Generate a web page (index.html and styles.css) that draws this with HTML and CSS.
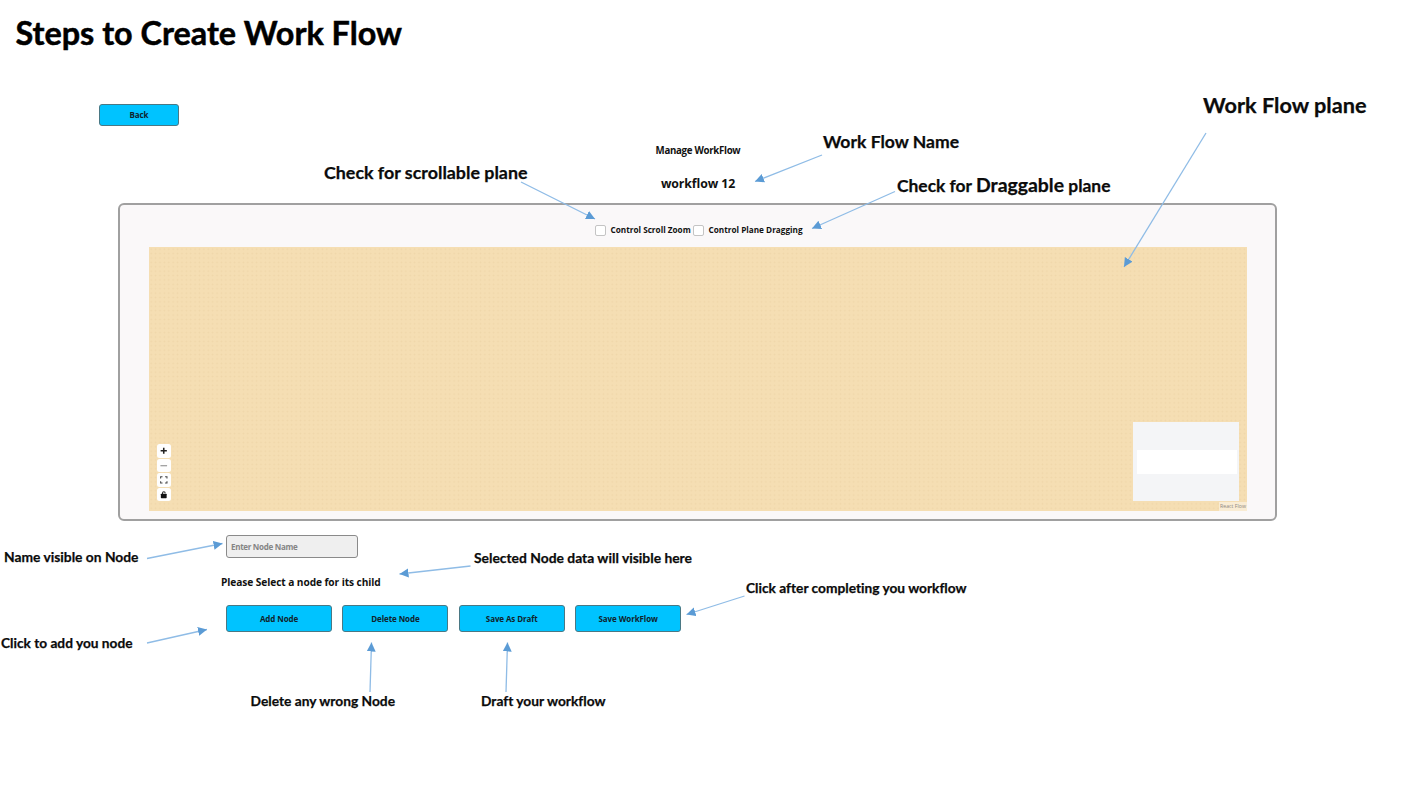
FILE: index.html
```html
<!DOCTYPE html>
<html lang="en">
<head>
<meta charset="utf-8">
<title>Steps to Create Work Flow</title>
<link rel="stylesheet" href="styles.css">
</head>
<body>
<main class="slide">
  <h1 class="title"><svg class="title-art" width="400" height="50"><text x="15.5" y="45" textLength="386.500" lengthAdjust="spacingAndGlyphs">Steps to Create Work Flow</text></svg></h1>
  <button class="btn back">Back</button>
  <header class="heading">
    <p class="manage">Manage WorkFlow</p>
    <h2 class="name">workflow 12</h2>
  </header>
  <section class="panel">
    <div class="checks">
      <label class="check"><span class="box"></span><span class="scroll-label">Control Scroll Zoom</span></label>
      <label class="check"><span class="box"></span><span class="drag-label">Control Plane Dragging</span></label>
    </div>
    <div class="plane">
      <div class="controls">
        <span class="control"><svg viewBox="0 0 13 13"><path d="M6.5 3.500v6M3.500 6.500h6" stroke="#222" stroke-width="1.500"/></svg></span>
        <span class="control"><svg viewBox="0 0 13 13"><path d="M3.300 6.500h6.400" stroke="#888" stroke-width="1"/></svg></span>
        <span class="control"><svg viewBox="0 0 13 13"><path d="M3.500 5.300V3.700h1.800M7.800 3.700h1.800v1.600M9.600 8v1.600H7.800M5.300 9.600H3.500V8" fill="none" stroke="#444" stroke-width="1"/></svg></span>
        <span class="control"><svg viewBox="0 0 13 13"><rect x="3.700" y="5.500" width="5.600" height="4.300" rx=".6" fill="#111"/><path d="M5.300 5.700V5a1.300 1.300 0 0 1 2.600 0" fill="none" stroke="#222" stroke-width="1"/></svg></span>
      </div>
      <div class="corner">
        <div class="minimap"><div class="viewport"></div></div>
        <div class="attribution">React Flow</div>
      </div>
    </div>
  </section>
  <section class="form">
    <input class="node-name" placeholder="Enter Node Name">
    <p class="hint">Please Select a node for its child</p>
    <div class="actions">
      <button class="btn">Add Node</button>
      <button class="btn">Delete Node</button>
      <button class="btn">Save As Draft</button>
      <button class="btn">Save WorkFlow</button>
    </div>
  </section>
  <svg class="notes" viewBox="0 0 1404 786">
    <defs>
      <marker id="tip" markerUnits="userSpaceOnUse" markerWidth="10" markerHeight="10" refX="9" refY="4.5" orient="auto"><path d="M0 0L9 4.5L0 9z" fill="#5b9bd5"/></marker>
    </defs>
    <g class="arrows">
      <path d="M521 182L595 219"/>
      <path d="M822 155L755 181.500"/>
      <path d="M895 191.500L812 228.500"/>
      <path d="M1206 133L1124 267"/>
      <path d="M147 558.500L222.500 543.500"/>
      <path d="M470.500 566L399.500 574"/>
      <path d="M147 643L207 629.500"/>
      <path d="M744.500 596L686.500 614.500"/>
      <path d="M370 692L371.500 642.500"/>
      <path d="M506 692L507.500 642.500"/>
    </g>
    <g class="labels" font-size="17.500">
      <text x="324" y="179" textLength="203.500" lengthAdjust="spacingAndGlyphs">Check for scrollable plane</text>
      <text x="823" y="148" textLength="136" lengthAdjust="spacingAndGlyphs">Work Flow Name</text>
      <text x="897" y="192" textLength="213.500" lengthAdjust="spacingAndGlyphs">Check for <tspan font-size="19.500">Draggable</tspan> plane</text>
      <text x="1203" y="113" font-size="21.500" textLength="163.500" lengthAdjust="spacingAndGlyphs">Work Flow plane</text>
    </g>
    <g class="labels" font-size="14">
      <text x="4" y="562" textLength="134.500" lengthAdjust="spacingAndGlyphs">Name visible on Node</text>
      <text x="1" y="648" textLength="131.500" lengthAdjust="spacingAndGlyphs">Click to add you node</text>
      <text x="474" y="563" textLength="218" lengthAdjust="spacingAndGlyphs">Selected Node data will visible here</text>
      <text x="746" y="593" textLength="220.500" lengthAdjust="spacingAndGlyphs">Click after completing you workflow</text>
      <text x="250.500" y="706" textLength="144.500" lengthAdjust="spacingAndGlyphs">Delete any wrong Node</text>
      <text x="481" y="706" textLength="124.500" lengthAdjust="spacingAndGlyphs">Draft your workflow</text>
    </g>
  </svg>
</main>
</body>
</html>
```
FILE: styles.css
```css
* { box-sizing: border-box; }
body { margin: 0; background: #fff; color: #111; font-family: "Open Sans", "Noto Sans", sans-serif; font-weight: 700; }
.slide { position: relative; width: 1404px; height: 786px; overflow: hidden; }
h1, h2, p { margin: 0; }
.title { height: 104px; }
.title-art { display: block; overflow: visible; }
.title-art text { font: 700 32.500px Lato, sans-serif; fill: #000; stroke: #000; stroke-width: .5px; }
.btn { height: 27px; padding: 0; border: 1px solid #4a7884; border-radius: 3px; background: #00c3ff; color: #10242c; font: 700 8px/1 "Open Sans", sans-serif; letter-spacing: -.1px; }
.back { display: block; width: 80px; height: 22px; margin-left: 99px; }
.heading { width: 1158px; margin-left: 119px; padding-top: 17px; text-align: center; }
.manage { font-size: 9.700px; line-height: 16px; letter-spacing: -.3px; }
.name { margin-top: 16px; font-size: 12.300px; line-height: 18px; letter-spacing: -.1px; }
.panel { width: 1159px; height: 318px; margin: 10px 0 0 118px; padding: 19px 28px 0 29px; border: 2px solid #a0a0a0; border-radius: 6px; background: #faf8f9; }
.checks { display: flex; justify-content: center; gap: 2px; height: 23px; font-size: 8.200px; line-height: 12px; }
.check { display: flex; align-items: center; height: 12px; gap: 5px; white-space: nowrap; }
.box { width: 11px; height: 11px; border: 1px solid #c4c4c4; border-radius: 2px; background: #fff; }
.scroll-label { width: 80px; }
.drag-label { width: 93px; }
.plane { display: flex; justify-content: space-between; align-items: flex-end; width: 1098px; height: 264px; background-color: #f5deb3; background-image: radial-gradient(circle, #efd6a9 .6px, transparent 1.100px); background-size: 4.400px 4.400px; }
.controls { margin: 0 0 10px 8px; }
.control { display: block; width: 13.500px; height: 13.500px; margin-bottom: 1px; border-radius: 2.500px; background: #fefefe; }
.control:last-child { margin-bottom: 0; }
.control svg { display: block; width: 13.500px; height: 13.500px; }
.corner { display: flex; flex-direction: column; align-items: flex-end; }
.minimap { width: 106px; height: 79px; margin: 0 8px 1px 0; padding: 28px 2.500px 0 3.500px; background: #f4f5f7; }
.viewport { height: 24px; background: #fff; }
.attribution { width: 28px; height: 9px; background: #f9ecd4; color: #8e8880; font-size: 5.200px; font-weight: 400; line-height: 9px; text-align: center; white-space: nowrap; }
.form { display: flex; flex-direction: column; align-items: flex-start; margin-left: 226px; padding-top: 14px; }
.node-name { width: 132px; height: 23px; padding: 0 4px; border: 1px solid #8a8a8a; border-radius: 3px; background: #efefef; font: 700 8px "Open Sans", sans-serif; letter-spacing: -.3px; }
.node-name::placeholder { color: #858585; opacity: 1; }
.hint { margin: 16px 0 0 -5px; font-size: 10.200px; line-height: 16px; letter-spacing: -.09px; white-space: nowrap; }
.actions { display: grid; grid-template-columns: repeat(4, 106px); gap: 10.400px; margin-top: 15px; }
.notes { position: absolute; inset: 0; width: 1404px; height: 786px; pointer-events: none; }
.arrows path { stroke: #8fbce6; stroke-width: 1.300; fill: none; marker-end: url(#tip); }
.labels text { font-family: Lato, sans-serif; font-weight: 700; font-variant-ligatures: none; fill: #0b0b0b; stroke: #0b0b0b; stroke-width: .25px; }
```
